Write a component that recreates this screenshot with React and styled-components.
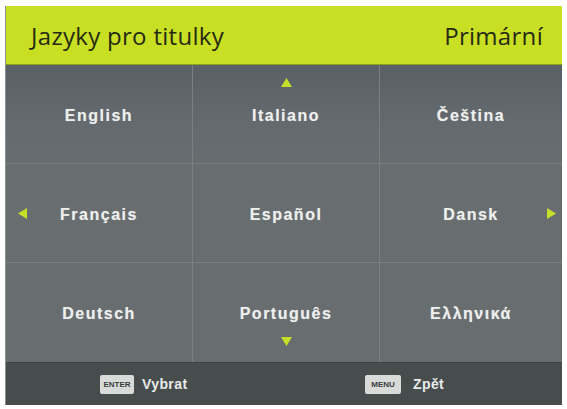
import React from "react";
import styled, { createGlobalStyle } from "styled-components";

const Global = createGlobalStyle`
  html, body { margin: 0; padding: 0; background: #ffffff; }
  body { width: 567px; height: 409px; overflow: hidden; }
`;

const Panel = styled.div`
  margin: 6px 0 0 5px;
  width: 557px;
  height: 399px;
  display: flex;
  flex-direction: column;
  background: #676c6f;
  border-left: 1px solid #8d9193;
  box-sizing: border-box;
`;

const Header = styled.div`
  height: 59px;
  flex: none;
  background: #c9df24;
  display: flex;
  align-items: center;
  justify-content: space-between;
  padding: 0 19px 0 25px;
  font-family: "Open Sans", "Noto Sans", sans-serif;
  font-size: 24px;
  font-weight: 500;
  letter-spacing: 0.3px;
  color: #262b12;
  border-bottom: 1px solid #8ea11a;
  box-sizing: border-box;
`;

const Grid = styled.div`
  display: grid;
  grid-template-columns: 187px 187px 1fr;
  grid-template-rows: repeat(3, 99px);
  background: linear-gradient(#596066 0px, #646a6e 60px, #686d70 100px, #686d70 100%);
`;

const Cell = styled.div`
  position: relative;
  display: flex;
  align-items: center;
  justify-content: center;
  padding-top: 3px;
  box-sizing: border-box;
  border-right: ${(p) => (p.$lastCol ? "none" : "1px solid #7a7f82")};
  border-bottom: ${(p) => (p.$lastRow ? "none" : "1px solid #7a7f82")};
  font-family: "Liberation Sans", Arial, sans-serif;
  font-weight: bold;
  font-size: 16px;
  letter-spacing: 1.5px;
  color: #eef0ee;
  text-shadow: 0 0 1px rgba(255, 255, 255, 0.4);
`;

const Arrow = styled.svg`
  position: absolute;
  ${(p) => p.$pos}
`;

const Footer = styled.div`
  flex: 1;
  background: #474c4d;
  border-top: 1px solid #3c4142;
  display: grid;
  grid-template-columns: 359px 1fr;
  align-items: center;
  font-family: "Liberation Sans", Arial, sans-serif;
  font-size: 14px;
  font-weight: bold;
  letter-spacing: 0.4px;
  color: #e8ebea;
`;

const Hint = styled.div`
  display: flex;
  align-items: center;
  gap: ${(p) => p.$gap}px;
  padding-left: ${(p) => p.$pad}px;
`;

const Key = styled.span`
  display: inline-flex;
  align-items: center;
  justify-content: center;
  width: ${(p) => p.$w}px;
  height: 19px;
  background: #d9dbd9;
  border-radius: 2px;
  color: #3a3e3f;
  font-family: "Liberation Sans", Arial, sans-serif;
  font-size: 8px;
  font-weight: bold;
  letter-spacing: 0;
`;

const up = (
  <Arrow $pos="top: 13px; left: 88px;" width="11" height="9" viewBox="0 0 11 9">
    <polygon points="5.5,0 11,9 0,9" fill="#c6e02a" />
  </Arrow>
);
const down = (
  <Arrow $pos="bottom: 16px; left: 88px;" width="11" height="9" viewBox="0 0 11 9">
    <polygon points="0,0 11,0 5.5,9" fill="#c6e02a" />
  </Arrow>
);
const left = (
  <Arrow $pos="top: 44px; left: 12px;" width="9" height="11" viewBox="0 0 9 11">
    <polygon points="9,0 9,11 0,5.5" fill="#c6e02a" />
  </Arrow>
);
const right = (
  <Arrow $pos="top: 44px; right: 6px;" width="9" height="11" viewBox="0 0 9 11">
    <polygon points="0,0 9,5.5 0,11" fill="#c6e02a" />
  </Arrow>
);

const cells = [
  { t: "English" },
  { t: "Italiano", extra: up },
  { t: "Čeština" },
  { t: "Français", extra: left },
  { t: "Español" },
  { t: "Dansk", extra: right },
  { t: "Deutsch" },
  { t: "Português", extra: down },
  { t: "Ελληνικά" },
];

export default function App() {
  return (
    <>
      <Global />
      <Panel>
        <Header>
          <span>Jazyky pro titulky</span>
          <span>Primární</span>
        </Header>
        <Grid>
          {cells.map((c, i) => (
            <Cell key={i} $lastCol={i % 3 === 2} $lastRow={i >= 6}>
              {c.t}
              {c.extra}
            </Cell>
          ))}
        </Grid>
        <Footer>
          <Hint $pad={94} $gap={8}>
            <Key $w={34}>ENTER</Key>
            Vybrat
          </Hint>
          <Hint $pad={0} $gap={12}>
            <Key $w={36}>MENU</Key>
            Zpět
          </Hint>
        </Footer>
      </Panel>
    </>
  );
}
